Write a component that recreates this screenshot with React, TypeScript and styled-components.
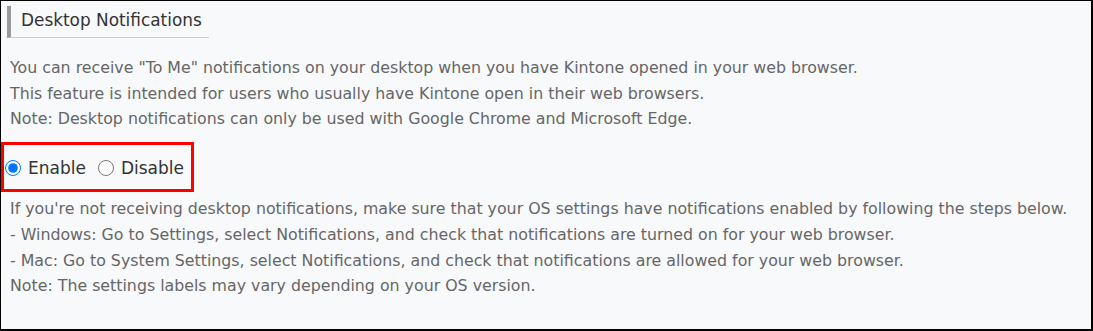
import React, { useState } from "react";
import styled, { createGlobalStyle } from "styled-components";

const GlobalStyle = createGlobalStyle`
  html, body {
    margin: 0;
    padding: 0;
    background: #ffffff;
  }
  body {
    font-family: "DejaVu Sans", "Noto Sans", sans-serif;
  }
`;

const Panel = styled.section`
  box-sizing: border-box;
  width: 1093px;
  height: 331px;
  border: 1px solid #000;
  border-right-width: 2px;
  border-bottom-width: 2px;
  background: #f7f9fb;
  overflow: hidden;
`;

const Heading = styled.h3`
  box-sizing: border-box;
  width: 202px;
  height: 32px;
  margin: 5px 0 0 6px;
  padding: 0 0 0 10px;
  border-left: 4px solid #999;
  border-bottom: 1px solid #ccc;
  font-size: 16.9px;
  font-weight: 400;
  line-height: 29px;
  color: #333;
  white-space: nowrap;
`;

const Text = styled.p<{ $top: number }>`
  margin: ${(p) => p.$top}px 0 0 9px;
  font-size: 15.8px;
  line-height: 25.7px;
  color: #666;
  white-space: nowrap;
`;

const RadioGroup = styled.div`
  box-sizing: border-box;
  display: flex;
  align-items: center;
  width: 193px;
  height: 50px;
  margin-top: 10px;
  padding: 2px 0 0 1px;
  border: 3px solid #f00;
`;

const Option = styled.label`
  display: flex;
  align-items: center;
  gap: 7px;
  font-size: 17px;
  color: #333;
  cursor: pointer;

  & + & {
    margin-left: 12px;
  }
`;

const Radio = styled.input`
  width: 16px;
  height: 16px;
  margin: 0;
  accent-color: #0075ff;
`;

export default function App() {
  const [mode, setMode] = useState("enable");

  return (
    <>
      <GlobalStyle />
      <Panel>
        <Heading>Desktop Notifications</Heading>
        <Text $top={17}>
          You can receive "To Me" notifications on your desktop when you have Kintone opened in your web browser.
          <br />
          This feature is intended for users who usually have Kintone open in their web browsers.
          <br />
          Note: Desktop notifications can only be used with Google Chrome and Microsoft Edge.
        </Text>
        <RadioGroup>
          <Option>
            <Radio type="radio" name="desktop" checked={mode === "enable"} onChange={() => setMode("enable")} />
            Enable
          </Option>
          <Option>
            <Radio type="radio" name="desktop" checked={mode === "disable"} onChange={() => setMode("disable")} />
            Disable
          </Option>
        </RadioGroup>
        <Text $top={4}>
          If you're not receiving desktop notifications, make sure that your OS settings have notifications enabled by following the steps below.
          <br />
          - Windows: Go to Settings, select Notifications, and check that notifications are turned on for your web browser.
          <br />
          - Mac: Go to System Settings, select Notifications, and check that notifications are allowed for your web browser.
          <br />
          Note: The settings labels may vary depending on your OS version.
        </Text>
      </Panel>
    </>
  );
}
